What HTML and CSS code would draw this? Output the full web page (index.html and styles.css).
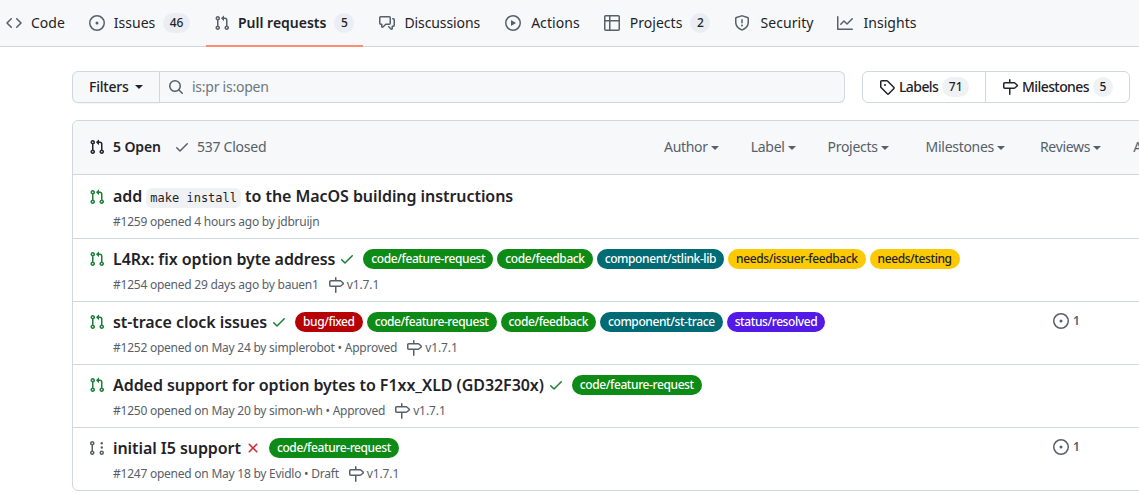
FILE: index.html
```html
<!DOCTYPE html>
<html lang="en">
<head>
  <meta charset="UTF-8" />
  <meta name="viewport" content="width=device-width, initial-scale=1.0"/>
  <title>Pull requests</title>
  <link rel="stylesheet" href="styles.css">
</head>
<body>
  <svg class="sprites" aria-hidden="true">
    <symbol id="i-code" viewBox="0 0 16 16"><path d="m11.28 3.22 4.25 4.25a.75.75 0 0 1 0 1.06l-4.25 4.25a.749.749 0 0 1-1.275-.326.749.749 0 0 1 .215-.734L13.94 8l-3.72-3.72a.749.749 0 0 1 .326-1.275.749.749 0 0 1 .734.215Zm-6.56 0a.751.751 0 0 1 1.042.018.751.751 0 0 1 .018 1.042L2.06 8l3.72 3.72a.749.749 0 0 1-.326 1.275.749.749 0 0 1-.734-.215L.47 8.53a.75.75 0 0 1 0-1.06Z"/></symbol>
    <symbol id="i-issue" viewBox="0 0 16 16"><path d="M8 9.5a1.5 1.5 0 1 0 0-3 1.5 1.5 0 0 0 0 3Z"/><path d="M8 0a8 8 0 1 1 0 16A8 8 0 0 1 8 0ZM1.5 8a6.5 6.5 0 1 0 13 0 6.5 6.5 0 0 0-13 0Z"/></symbol>
    <symbol id="i-pr" viewBox="0 0 16 16"><path d="M1.5 3.25a2.25 2.25 0 1 1 3 2.122v5.256a2.251 2.251 0 1 1-1.5 0V5.372A2.25 2.25 0 0 1 1.5 3.25Zm5.677-.177L9.573.677A.25.25 0 0 1 10 .854V2.5h1A2.5 2.5 0 0 1 13.5 5v5.628a2.251 2.251 0 1 1-1.5 0V5a1 1 0 0 0-1-1h-1v1.646a.25.25 0 0 1-.427.177L7.177 3.427a.25.25 0 0 1 0-.354ZM3.75 2.5a.75.75 0 1 0 0 1.5.75.75 0 0 0 0-1.5Zm0 9.5a.75.75 0 1 0 0 1.5.75.75 0 0 0 0-1.5Zm8.25.75a.75.75 0 1 0 1.5 0 .75.75 0 0 0-1.5 0Z"/></symbol>
    <symbol id="i-draft" viewBox="0 0 16 16"><path d="M3.25 1A2.25 2.25 0 0 1 4 5.372v5.256a2.251 2.251 0 1 1-1.5 0V5.372A2.251 2.251 0 0 1 3.25 1Zm9.5 14a2.25 2.25 0 1 1 0-4.5 2.25 2.25 0 0 1 0 4.5ZM2.5 3.25a.75.75 0 1 0 1.5 0 .75.75 0 0 0-1.5 0ZM3.25 12a.75.75 0 1 0 0 1.5.75.75 0 0 0 0-1.5Zm9.5 0a.75.75 0 1 0 0 1.5.75.75 0 0 0 0-1.5ZM14 7.5a1.25 1.25 0 1 1-2.5 0 1.25 1.25 0 0 1 2.5 0Zm0-4.25a1.25 1.25 0 1 1-2.5 0 1.25 1.25 0 0 1 2.5 0Z"/></symbol>
    <symbol id="i-discuss" viewBox="0 0 16 16"><path d="M1.75 1h8.5c.966 0 1.75.784 1.75 1.75v5.5A1.75 1.75 0 0 1 10.25 10H7.061l-2.574 2.573A1.458 1.458 0 0 1 2 11.543V10h-.25A1.75 1.75 0 0 1 0 8.25v-5.5C0 1.784.784 1 1.75 1ZM1.5 2.75v5.5c0 .138.112.25.25.25h1a.75.75 0 0 1 .75.75v2.19l2.72-2.72a.749.749 0 0 1 .53-.22h3.5a.25.25 0 0 0 .25-.25v-5.5a.25.25 0 0 0-.25-.25h-8.5a.25.25 0 0 0-.25.25Zm13 2a.25.25 0 0 0-.25-.25h-.5a.75.75 0 0 1 0-1.5h.5c.966 0 1.75.784 1.75 1.75v5.5A1.75 1.75 0 0 1 14.25 12H14v1.543a1.458 1.458 0 0 1-2.487 1.03L9.22 12.28a.749.749 0 0 1 .326-1.275.749.749 0 0 1 .734.215l2.22 2.22v-2.19a.75.75 0 0 1 .75-.75h1a.25.25 0 0 0 .25-.25Z"/></symbol>
    <symbol id="i-play" viewBox="0 0 16 16"><path d="M8 0a8 8 0 1 1 0 16A8 8 0 0 1 8 0ZM1.5 8a6.5 6.5 0 1 0 13 0 6.5 6.5 0 0 0-13 0Zm4.879-2.773 4.264 2.559a.25.25 0 0 1 0 .428l-4.264 2.559A.25.25 0 0 1 6 10.559V5.442a.25.25 0 0 1 .379-.215Z"/></symbol>
    <symbol id="i-table" viewBox="0 0 16 16"><path d="M0 1.75C0 .784.784 0 1.75 0h12.5C15.216 0 16 .784 16 1.75v12.5A1.75 1.75 0 0 1 14.25 16H1.75A1.75 1.75 0 0 1 0 14.25ZM6.5 6.5v8h7.75a.25.25 0 0 0 .25-.25V6.5Zm8-1.5V1.75a.25.25 0 0 0-.25-.25H6.5V5Zm-13 1.5v7.75c0 .138.112.25.25.25H5v-8ZM5 5V1.5H1.75a.25.25 0 0 0-.25.25V5Z"/></symbol>
    <symbol id="i-shield" viewBox="0 0 16 16"><path d="M7.467.133a1.748 1.748 0 0 1 1.066 0l5.25 1.68A1.75 1.75 0 0 1 15 3.48V7c0 1.566-.32 3.182-1.303 4.682-.983 1.498-2.585 2.813-5.032 3.855a1.697 1.697 0 0 1-1.33 0c-2.447-1.042-4.049-2.357-5.032-3.855C1.32 10.182 1 8.566 1 7V3.48a1.75 1.75 0 0 1 1.217-1.667Zm.61 1.429a.25.25 0 0 0-.153 0l-5.25 1.68a.25.25 0 0 0-.174.238V7c0 1.358.275 2.666 1.057 3.86.784 1.194 2.121 2.34 4.366 3.297a.196.196 0 0 0 .154 0c2.245-.956 3.582-2.104 4.366-3.298C13.225 9.666 13.5 8.36 13.5 7V3.48a.251.251 0 0 0-.174-.237l-5.25-1.68ZM8.75 4.75v3a.75.75 0 0 1-1.5 0v-3a.75.75 0 0 1 1.5 0ZM9 10.5a1 1 0 1 1-2 0 1 1 0 0 1 2 0Z"/></symbol>
    <symbol id="i-graph" viewBox="0 0 16 16"><path d="M1.5 1.75V13.5h13.75a.75.75 0 0 1 0 1.5H.75a.75.75 0 0 1-.75-.75V1.75a.75.75 0 0 1 1.5 0Zm14.28 2.53-5.25 5.25a.75.75 0 0 1-1.06 0L7 7.06 4.28 9.78a.751.751 0 0 1-1.042-.018.751.751 0 0 1-.018-1.042l3.25-3.25a.75.75 0 0 1 1.06 0L10 7.94l4.72-4.72a.751.751 0 0 1 1.042.018.751.751 0 0 1 .018 1.042Z"/></symbol>
    <symbol id="i-search" viewBox="0 0 16 16"><path d="M10.68 11.74a6 6 0 0 1-7.922-8.982 6 6 0 0 1 8.982 7.922l3.04 3.04a.749.749 0 0 1-.326 1.275.749.749 0 0 1-.734-.215ZM11.5 7a4.499 4.499 0 1 0-8.997 0A4.499 4.499 0 0 0 11.5 7Z"/></symbol>
    <symbol id="i-tag" viewBox="0 0 16 16"><path d="M1 7.775V2.75C1 1.784 1.784 1 2.75 1h5.025c.464 0 .91.184 1.238.513l6.25 6.25a1.75 1.75 0 0 1 0 2.474l-5.026 5.026a1.75 1.75 0 0 1-2.474 0l-6.25-6.25A1.75 1.75 0 0 1 1 7.775Zm1.5 0c0 .066.026.13.073.177l6.25 6.25a.25.25 0 0 0 .354 0l5.025-5.025a.25.25 0 0 0 0-.354l-6.25-6.25a.25.25 0 0 0-.177-.073H2.75a.25.25 0 0 0-.25.25ZM6 5a1 1 0 1 1 0 2 1 1 0 0 1 0-2Z"/></symbol>
    <symbol id="i-milestone" viewBox="0 0 16 16"><path d="M7.75 0a.75.75 0 0 1 .75.75V3h3.634c.414 0 .814.147 1.13.414l2.07 1.75a1.75 1.75 0 0 1 0 2.672l-2.07 1.75a1.75 1.75 0 0 1-1.13.414H8.5v5.25a.75.75 0 0 1-1.5 0V10H2.75A1.75 1.75 0 0 1 1 8.25v-3.5C1 3.784 1.784 3 2.75 3H7V.75A.75.75 0 0 1 7.75 0Zm4.384 8.5a.25.25 0 0 0 .161-.06l2.07-1.75a.248.248 0 0 0 0-.38l-2.07-1.75a.25.25 0 0 0-.161-.06H2.75a.25.25 0 0 0-.25.25v3.5c0 .138.112.25.25.25h9.384Z"/></symbol>
    <symbol id="i-check" viewBox="0 0 16 16"><path d="M13.78 4.22a.75.75 0 0 1 0 1.06l-7.25 7.25a.75.75 0 0 1-1.06 0L2.22 9.28a.751.751 0 0 1 .018-1.042.751.751 0 0 1 1.042-.018L6 10.94l6.72-6.72a.75.75 0 0 1 1.06 0Z"/></symbol>
    <symbol id="i-x" viewBox="0 0 16 16"><path d="M3.72 3.72a.75.75 0 0 1 1.06 0L8 6.94l3.22-3.22a.749.749 0 0 1 1.275.326.749.749 0 0 1-.215.734L9.06 8l3.22 3.22a.749.749 0 0 1-.326 1.275.749.749 0 0 1-.734-.215L8 9.06l-3.22 3.22a.751.751 0 0 1-1.042-.018.751.751 0 0 1-.018-1.042L6.94 8 3.72 4.78a.75.75 0 0 1 0-1.06Z"/></symbol>
  </svg>

  <nav class="repo-nav">
    <a class="tab"><svg class="icon"><use href="#i-code"/></svg>Code</a>
    <a class="tab"><svg class="icon"><use href="#i-issue"/></svg>Issues<span class="counter">46</span></a>
    <a class="tab active"><svg class="icon"><use href="#i-pr"/></svg>Pull requests<span class="counter">5</span></a>
    <a class="tab"><svg class="icon"><use href="#i-discuss"/></svg>Discussions</a>
    <a class="tab"><svg class="icon"><use href="#i-play"/></svg>Actions</a>
    <a class="tab"><svg class="icon"><use href="#i-table"/></svg>Projects<span class="counter">2</span></a>
    <a class="tab"><svg class="icon"><use href="#i-shield"/></svg>Security</a>
    <a class="tab"><svg class="icon"><use href="#i-graph"/></svg>Insights</a>
  </nav>

  <main class="content">
    <div class="toolbar">
      <div class="filter-group">
        <button class="filter-btn">Filters<span class="caret"></span></button>
        <div class="search"><svg class="icon"><use href="#i-search"/></svg><span>is:pr is:open</span></div>
      </div>
      <div class="link-group">
        <a class="link-btn"><svg class="icon"><use href="#i-tag"/></svg>Labels<span class="counter">71</span></a>
        <a class="link-btn"><svg class="icon"><use href="#i-milestone"/></svg>Milestones<span class="counter">5</span></a>
      </div>
    </div>

    <section class="box">
      <div class="box-header">
        <div class="states">
          <a class="state current"><svg class="icon"><use href="#i-pr"/></svg>5 Open</a>
          <a class="state"><svg class="icon"><use href="#i-check"/></svg>537 Closed</a>
        </div>
        <div class="sorts">
          <a>Author<span class="caret"></span></a>
          <a>Label<span class="caret"></span></a>
          <a>Projects<span class="caret"></span></a>
          <a>Milestones<span class="caret"></span></a>
          <a>Reviews<span class="caret"></span></a>
          <a>Assignee<span class="caret"></span></a>
        </div>
      </div>

      <div class="row">
        <svg class="icon state-icon open"><use href="#i-pr"/></svg>
        <div class="row-main">
          <div class="row-title"><a class="title">add <code>make install</code> to the MacOS building instructions</a></div>
          <div class="row-meta">#1259 opened 4 hours ago by jdbruijn</div>
        </div>
      </div>

      <div class="row">
        <svg class="icon state-icon open"><use href="#i-pr"/></svg>
        <div class="row-main">
          <div class="row-title">
            <a class="title">L4Rx: fix option byte address</a>
            <svg class="icon status ok"><use href="#i-check"/></svg>
            <span class="label green">code/feature-request</span>
            <span class="label green">code/feedback</span>
            <span class="label teal">component/stlink-lib</span>
            <span class="label yellow">needs/issuer-feedback</span>
            <span class="label yellow">needs/testing</span>
          </div>
          <div class="row-meta">#1254 opened 29 days ago by bauen1<span class="milestone"><svg class="icon"><use href="#i-milestone"/></svg>v1.7.1</span></div>
        </div>
      </div>

      <div class="row">
        <svg class="icon state-icon open"><use href="#i-pr"/></svg>
        <div class="row-main">
          <div class="row-title">
            <a class="title">st-trace clock issues</a>
            <svg class="icon status ok"><use href="#i-check"/></svg>
            <span class="label red">bug/fixed</span>
            <span class="label green">code/feature-request</span>
            <span class="label green">code/feedback</span>
            <span class="label teal">component/st-trace</span>
            <span class="label purple">status/resolved</span>
          </div>
          <div class="row-meta">#1252 opened on May 24 by simplerobot • Approved<span class="milestone"><svg class="icon"><use href="#i-milestone"/></svg>v1.7.1</span></div>
        </div>
        <a class="linked"><svg class="icon"><use href="#i-issue"/></svg>1</a>
      </div>

      <div class="row">
        <svg class="icon state-icon open"><use href="#i-pr"/></svg>
        <div class="row-main">
          <div class="row-title">
            <a class="title">Added support for option bytes to F1xx_XLD (GD32F30x)</a>
            <svg class="icon status ok"><use href="#i-check"/></svg>
            <span class="label green">code/feature-request</span>
          </div>
          <div class="row-meta">#1250 opened on May 20 by simon-wh • Approved<span class="milestone"><svg class="icon"><use href="#i-milestone"/></svg>v1.7.1</span></div>
        </div>
      </div>

      <div class="row">
        <svg class="icon state-icon"><use href="#i-draft"/></svg>
        <div class="row-main">
          <div class="row-title">
            <a class="title">initial I5 support</a>
            <svg class="icon status fail"><use href="#i-x"/></svg>
            <span class="label green">code/feature-request</span>
          </div>
          <div class="row-meta">#1247 opened on May 18 by Evidlo • Draft<span class="milestone"><svg class="icon"><use href="#i-milestone"/></svg>v1.7.1</span></div>
        </div>
        <a class="linked"><svg class="icon"><use href="#i-issue"/></svg>1</a>
      </div>
    </section>
  </main>
</body>
</html>
```

FILE: styles.css
```css
html, body {
  margin: 0;
  height: 497px;
  overflow: hidden;
}

body {
  font-family: "Noto Sans", sans-serif;
  font-size: 14px;
  line-height: 20px;
  color: #1f2328;
  background: #fff;
}

.sprites {
  display: none;
}

.icon {
  width: 16px;
  height: 16px;
  fill: #57606a;
  flex: none;
}

.counter {
  min-width: 20px;
  box-sizing: border-box;
  padding: 0 6.5px;
  margin-left: 8px;
  font-size: 12px;
  line-height: 20px;
  font-weight: 500;
  letter-spacing: 0;
  text-align: center;
  border-radius: 10px;
  background: #eaeef2;
  color: #1f2328;
}

.repo-nav {
  display: flex;
  gap: 8px;
  height: 46px;
  margin-left: -2px;
  margin-right: -2px;
  background: #f6f8fa;
  border-bottom: 1px solid #d0d7de;
}

.tab {
  display: flex;
  align-items: center;
  height: 46px;
  padding: 0 8px;
  box-sizing: border-box;
}

.tab .icon {
  margin-right: 9px;
}

.tab:nth-child(4) {
  letter-spacing: -0.1px;
  padding-right: 9px;
}

.tab:nth-child(n+5) {
  letter-spacing: 0.05px;
}

.tab:nth-child(n+5) .icon {
  margin-right: 10px;
}

.tab.active {
  font-weight: 600;
  border-bottom: 2px solid #fd8c73;
  height: 47px;
  padding-right: 9px;
}

.tab.active .icon {
  margin-right: 8px;
}

.content {
  padding: 24px 9px 0 72px;
}

.toolbar {
  display: flex;
  justify-content: space-between;
  height: 32px;
  margin-bottom: 17px;
}

.filter-group {
  display: flex;
  width: 773px;
}

.filter-btn {
  display: flex;
  align-items: center;
  width: 88px;
  padding: 0 0 0 16px;
  font: inherit;
  font-weight: 500;
  letter-spacing: -0.2px;
  color: #1f2328;
  background: #f6f8fa;
  border: 1px solid #d0d7de;
  border-radius: 6px 0 0 6px;
  box-shadow: 0 1px 0 rgba(31, 35, 40, 0.04);
}

.caret {
  display: inline-block;
  margin-left: 6px;
  border-top: 4px solid currentColor;
  border-left: 4px solid transparent;
  border-right: 4px solid transparent;
}

.search {
  flex: 1;
  display: flex;
  align-items: center;
  gap: 8px;
  padding-left: 8px;
  letter-spacing: -0.25px;
  color: #6e7781;
  background: #f6f8fa;
  border: 1px solid #d0d7de;
  border-left: none;
  border-radius: 0 6px 6px 0;
}

.link-group {
  display: flex;
  border: 1px solid #d0d7de;
  border-radius: 6px;
}

.link-btn {
  display: flex;
  align-items: center;
  padding: 0 16px;
  font-weight: 500;
  letter-spacing: -0.58px;
}

.link-btn + .link-btn {
  border-left: 1px solid #d0d7de;
}

.link-btn .icon {
  margin-right: 4px;
  fill: #1f2328;
}

.link-btn .counter {
  margin-left: 4px;
  background: #eff2f5;
}

.box {
  width: 1240px;
  box-sizing: border-box;
  border: 1px solid #d0d7de;
  border-radius: 6px;
}

.box-header {
  display: flex;
  align-items: center;
  height: 53px;
  box-sizing: border-box;
  padding: 0 16px 2px;
  background: #f6f8fa;
  border-radius: 6px 6px 0 0;
}

.states {
  display: flex;
  gap: 13px;
  width: 575px;
}

.state {
  display: flex;
  align-items: center;
  gap: 7px;
  letter-spacing: -0.25px;
  color: #57606a;
}

.state.current {
  gap: 8px;
  font-weight: 600;
  letter-spacing: -0.1px;
  color: #1f2328;
}

.state.current .icon {
  fill: #1f2328;
}

.sorts {
  display: flex;
  gap: 32px;
  letter-spacing: -0.3px;
  white-space: nowrap;
  color: #57606a;
}

.sorts a:nth-child(4) {
  margin-left: 5px;
}

.sorts a:nth-child(5) {
  margin-left: 3px;
}

.sorts .caret {
  margin-left: 3px;
  vertical-align: 2px;
}

.row {
  display: flex;
  align-items: flex-start;
  height: 63px;
  box-sizing: border-box;
  padding-top: 8px;
  border-top: 1px solid #d0d7de;
  position: relative;
}

.box-header + .row {
  height: 64px;
  padding-top: 10px;
}

.box-header + .row .row-meta {
  margin-top: 4px;
}

.state-icon {
  margin: 4px 8px 0 16px;
}

.state-icon.open {
  fill: #1a7f37;
}

.row-main {
  flex: 1;
  min-width: 0;
}

.row-title {
  display: flex;
  align-items: center;
  gap: 4px;
  height: 24px;
}

.title {
  font-size: 16px;
  line-height: 24px;
  font-weight: 600;
  letter-spacing: -0.06px;
  white-space: nowrap;
}

.title code {
  font-family: "DejaVu Sans Mono", monospace;
  font-size: 12px;
  font-weight: 400;
  letter-spacing: 0;
  padding: 3px 4px;
  border-radius: 6px;
  background: #eff1f3;
}

.status {
  margin: 0 4px 0 0;
}

.status.ok {
  fill: #1a7f37;
}

.status.fail {
  fill: #cf222e;
}

.label {
  padding: 0 8px;
  font-size: 12px;
  line-height: 20px;
  font-weight: 500;
  letter-spacing: -0.4px;
  white-space: nowrap;
  border-radius: 10px;
  color: #fff;
}

.label.green {
  background: #0e8a16;
}

.label.teal {
  background: #006b75;
}

.label.yellow {
  background: #fbca04;
  color: #1f2328;
}

.label.red {
  background: #b60205;
}

.label.purple {
  background: #5319e7;
}

.row-meta {
  display: flex;
  align-items: center;
  margin-top: 5px;
  font-size: 12px;
  line-height: 18px;
  letter-spacing: -0.24px;
  color: #57606a;
}

.milestone {
  display: flex;
  align-items: center;
  gap: 3px;
  margin-left: 9px;
  font-size: 12px;
  letter-spacing: -0.1px;
}

.linked {
  position: absolute;
  left: 980px;
  top: 9px;
  display: flex;
  align-items: center;
  gap: 4px;
  font-size: 12px;
  font-weight: 600;
  color: #57606a;
}
```
